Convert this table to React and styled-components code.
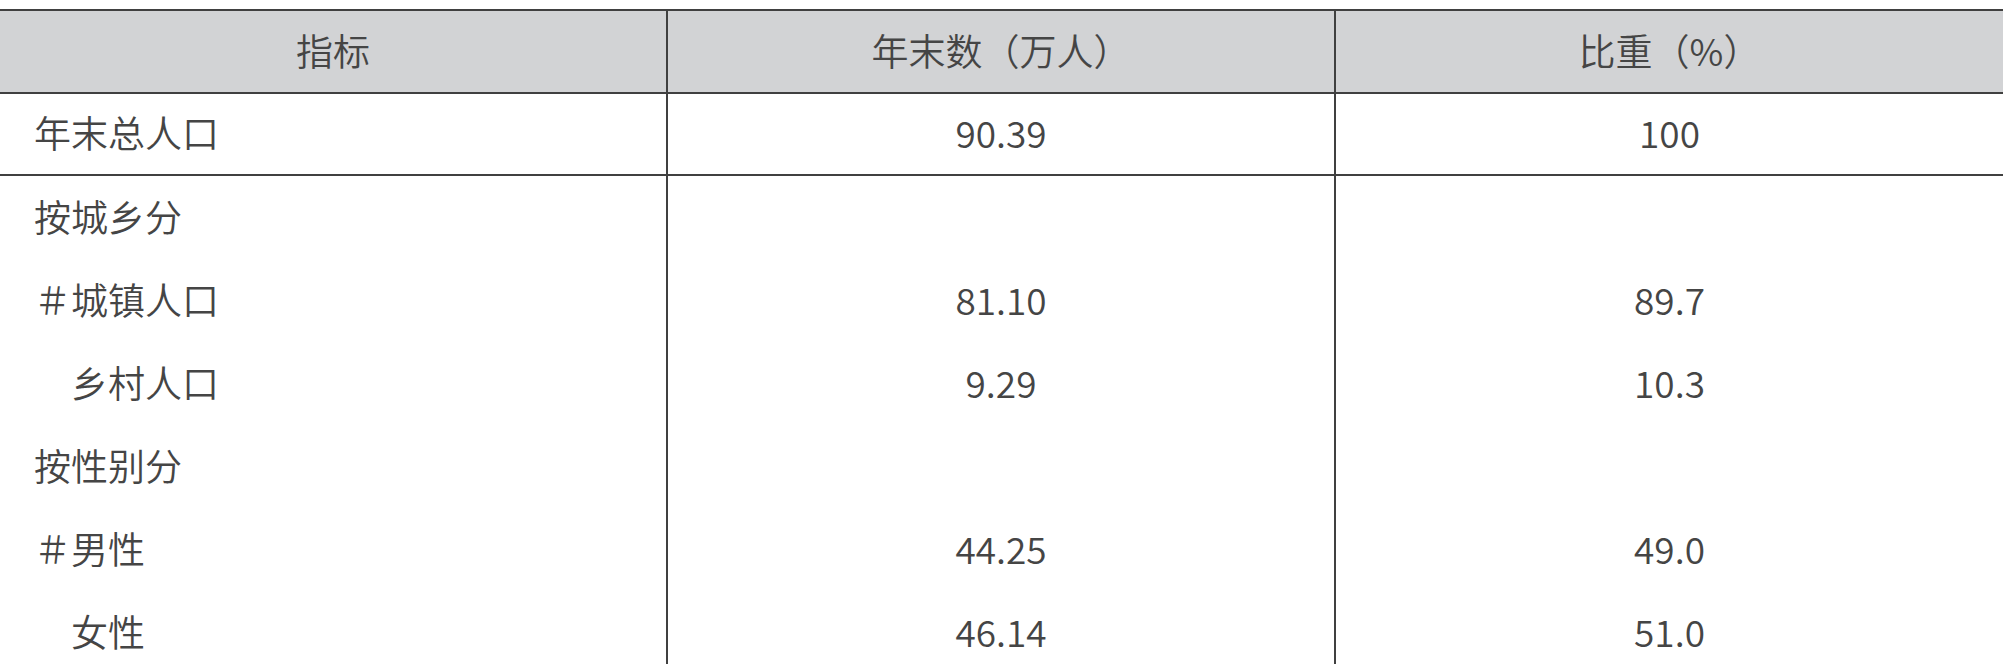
import React from 'react'
import styled, { createGlobalStyle } from 'styled-components'

const GlobalStyle = createGlobalStyle`
  html, body {
    margin: 0;
    padding: 0;
    background: #fff;
  }
  body {
    font-family: "Noto Sans CJK SC", "Noto Sans", sans-serif;
    color: #454545;
  }
`

const Page = styled.div`
  padding-top: 9px;
`

const Table = styled.table`
  width: 2003px;
  table-layout: fixed;
  border-collapse: separate;
  border-spacing: 0;
  font-size: 37px;
  font-weight: 350;
  line-height: 1;
`

const HeadCell = styled.th`
  box-sizing: border-box;
  height: 85px;
  padding: 0 0 3px;
  background: #d2d3d5;
  font-weight: 350;
  text-align: center;
  vertical-align: middle;
  border-top: 2px solid #404040;
  border-bottom: 2px solid #404040;
  border-right: ${p => (p.$last ? 'none' : '2px solid #404040')};
`

const Cell = styled.td`
  box-sizing: border-box;
  height: ${p => (p.$first ? '82px' : '83px')};
  padding: 0 0 3px ${p => (p.$label ? '34px' : '0')};
  text-align: ${p => (p.$label ? 'left' : 'center')};
  vertical-align: middle;
  white-space: pre;
  border-bottom: ${p => (p.$first ? '2px solid #404040' : 'none')};
  border-right: ${p => (p.$last ? 'none' : '2px solid #404040')};
`

const rows = [
  ['年末总人口', '90.39', '100'],
  ['按城乡分', '', ''],
  ['＃城镇人口', '81.10', '89.7'],
  ['　乡村人口', '9.29', '10.3'],
  ['按性别分', '', ''],
  ['＃男性', '44.25', '49.0'],
  ['　女性', '46.14', '51.0'],
]

export default function App() {
  return (
    <Page>
      <GlobalStyle />
      <Table>
        <colgroup>
          <col style={{ width: 668 }} />
          <col style={{ width: 668 }} />
          <col style={{ width: 667 }} />
        </colgroup>
        <thead>
          <tr>
            <HeadCell>指标</HeadCell>
            <HeadCell>年末数（万人）</HeadCell>
            <HeadCell $last>比重（%）</HeadCell>
          </tr>
        </thead>
        <tbody>
          {rows.map((r, i) => (
            <tr key={i}>
              <Cell $label $first={i === 0}>{r[0]}</Cell>
              <Cell $first={i === 0}>{r[1]}</Cell>
              <Cell $first={i === 0} $last>{r[2]}</Cell>
            </tr>
          ))}
        </tbody>
      </Table>
    </Page>
  )
}
